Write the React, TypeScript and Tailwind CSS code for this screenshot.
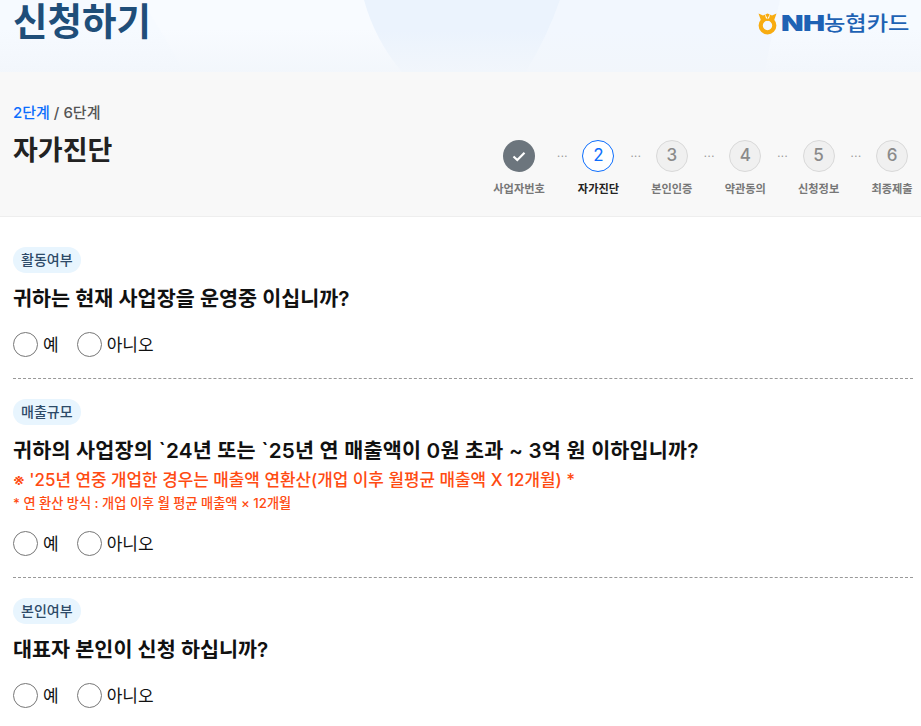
const FONT = "font-['Inter','Noto_Sans_CJK_KR',sans-serif]";

const steps = ["사업자번호", "자가진단", "본인인증", "약관동의", "신청정보", "최종제출"];

const Emblem = () => (
  <svg width="19" height="22" viewBox="0 0 19 22" className="mr-[4px]">
    <circle cx="9.5" cy="12.5" r="6.8" fill="none" stroke="#f8ac10" strokeWidth="4.2" />
    <path d="M0.5 0.5 L5 2.5 L9.5 0.5 L14 2.5 L18.5 0.5 L16 7.5 L12 6 L9.5 8 L7 6 L3 7.5 Z" fill="#f8ac10" />
    <path d="M6.5 0 L9.5 5.5 L12.5 0 L11 5.5 L8 5.5 Z" fill="#fff" />
  </svg>
);

const Stepper = () => (
  <div className="flex gap-[31.4px] pt-[68px] pr-[8px]">
    {steps.map((label, i) => (
      <div key={label} className={`relative flex flex-col items-center ${i === 0 ? "w-[54px]" : "w-[42px]"}`}>
        {i === 0 && (
          <div className="w-[32px] h-[32px] rounded-full bg-[#6c757d] flex items-center justify-center">
            <svg width="14" height="11" viewBox="0 0 14 11" fill="none">
              <path d="M1.5 5.5 L5.3 9 L12.5 1.8" stroke="#fff" strokeWidth="2.2" />
            </svg>
          </div>
        )}
        {i === 1 && (
          <div className="w-[32px] h-[32px] rounded-full bg-white border border-[#0d6efd] text-[#0d6efd] text-[17px] flex items-center justify-center">
            2
          </div>
        )}
        {i > 1 && (
          <div className="w-[32px] h-[32px] rounded-full bg-[#f0f0f0] border border-[#d9d9d9] text-[#8a8a8a] text-[17px] font-medium flex items-center justify-center">
            {i + 1}
          </div>
        )}
        <div className={`mt-[9px] text-[11.2px] leading-[16px] font-semibold whitespace-nowrap ${i === 1 ? "text-[#222]" : "text-[#777]"}`}>
          {label}
        </div>
        {i < 5 && (
          <div className="absolute top-[12px] right-[-22px] text-[#999] text-[11px] leading-[8px] tracking-[0.5px]">···</div>
        )}
      </div>
    ))}
  </div>
);

const Radio = ({ label }: { label: string }) => (
  <label className="flex items-center gap-[5px]">
    <span className="w-[25px] h-[25px] rounded-full bg-white border border-[#777]" />
    <span className="text-[17px] leading-[24px] text-[#111]">{label}</span>
  </label>
);

const Question = ({
  tag,
  title,
  titleClass,
  children,
  last,
}: {
  tag: string;
  title: string;
  titleClass?: string;
  children?: React.ReactNode;
  last?: boolean;
}) => (
  <section className={last ? "pt-[20px]" : "pt-[20px] pb-[21px] border-b border-dashed border-[#999]"}>
    <span className="inline-block h-[26px] px-[8px] rounded-full bg-[#e8f5fe] text-[14px] leading-[26px] font-medium text-[#2d4a68] align-top">
      {tag}
    </span>
    <h3 className={`mt-[12px] text-[20.7px] leading-[28px] font-semibold text-[#111] ${titleClass ?? ""}`}>{title}</h3>
    {children}
    <div className="mt-[19px] flex gap-[18px]">
      <Radio label="예" />
      <Radio label="아니오" />
    </div>
  </section>
);

export default function App() {
  return (
    <div className={`${FONT} w-[921px] h-[726px] overflow-hidden bg-white`}>
      <header className="relative h-[72px] overflow-hidden bg-[#f8fbff] flex justify-between px-[13px]">
        <svg className="absolute inset-0" width="921" height="72" viewBox="0 0 921 72">
          <defs>
            <linearGradient id="fade" x1="0" y1="0" x2="0" y2="1">
              <stop offset="0.4" stopColor="#f2f6fb" stopOpacity="0" />
              <stop offset="1" stopColor="#f2f6fb" stopOpacity="0.9" />
            </linearGradient>
          </defs>
          <path d="M140 0 Q165 35 183 72 H0 V0 Z" fill="#f6faff" />
          <path d="M560 0 Q548 35 526 72 H921 V0 Z" fill="#f2f7fe" />
          <path d="M364 0 Q375 40 402 72 H526 Q548 35 560 0 Z" fill="#ebf3fd" />
          <path d="M780 0 Q770 40 765 72 H921 V0 Z" fill="#f6faff" />
          <rect width="921" height="72" fill="url(#fade)" />
        </svg>
        <h1 className="relative h-[44px] text-[37.5px] leading-[44px] font-bold text-[#1f4e79]">신청하기</h1>
        <div className="relative flex items-center h-[22px] mt-[13px] mr-[-1px] text-[#1e62b4]">
          <Emblem />
          <span className="inline-block w-[41px] origin-left scale-x-[1.4] text-[21px] leading-[22px] font-black tracking-[-0.5px]">NH</span>
          <span className="inline-block w-[85px] ml-[2px] origin-left scale-x-[1.16] text-[20px] leading-[22px] font-medium whitespace-nowrap">농협카드</span>
        </div>
      </header>

      <div className="h-[145px] bg-[#f8f8f8] border-b border-[#eee] flex justify-between pl-[13px]">
        <div>
          <p className="mt-[31px] text-[15px] leading-[20px] font-medium text-[#555]">
            <span className="text-[#0d6efd]">2단계</span> / 6단계
          </p>
          <h2 className="mt-[10px] text-[27px] leading-[36px] font-semibold text-[#222]">자가진단</h2>
        </div>
        <Stepper />
      </div>

      <main className="pl-[13px] pr-[8px] pt-[10px]">
        <Question tag="활동여부" title="귀하는 현재 사업장을 운영중 이십니까?" />
        <Question
          tag="매출규모"
          title="귀하의 사업장의 `24년 또는 `25년 연 매출액이 0원 초과 ~ 3억 원 이하입니까?"
          titleClass="tracking-[0.2px]"
        >
          <p className="mt-[3px] text-[16.9px] leading-[24px] font-medium text-[#ff4b12]">
            ※ '25년 연중 개업한 경우는 매출액 연환산(개업 이후 월평균 매출액 X 12개월) *
          </p>
          <p className="mt-[1px] -mb-[1px] text-[13.2px] leading-[20px] font-medium text-[#ff4b12]">
            * 연 환산 방식 : 개업 이후 월 평균 매출액 × 12개월
          </p>
        </Question>
        <Question tag="본인여부" title="대표자 본인이 신청 하십니까?" last />
      </main>
    </div>
  );
}
